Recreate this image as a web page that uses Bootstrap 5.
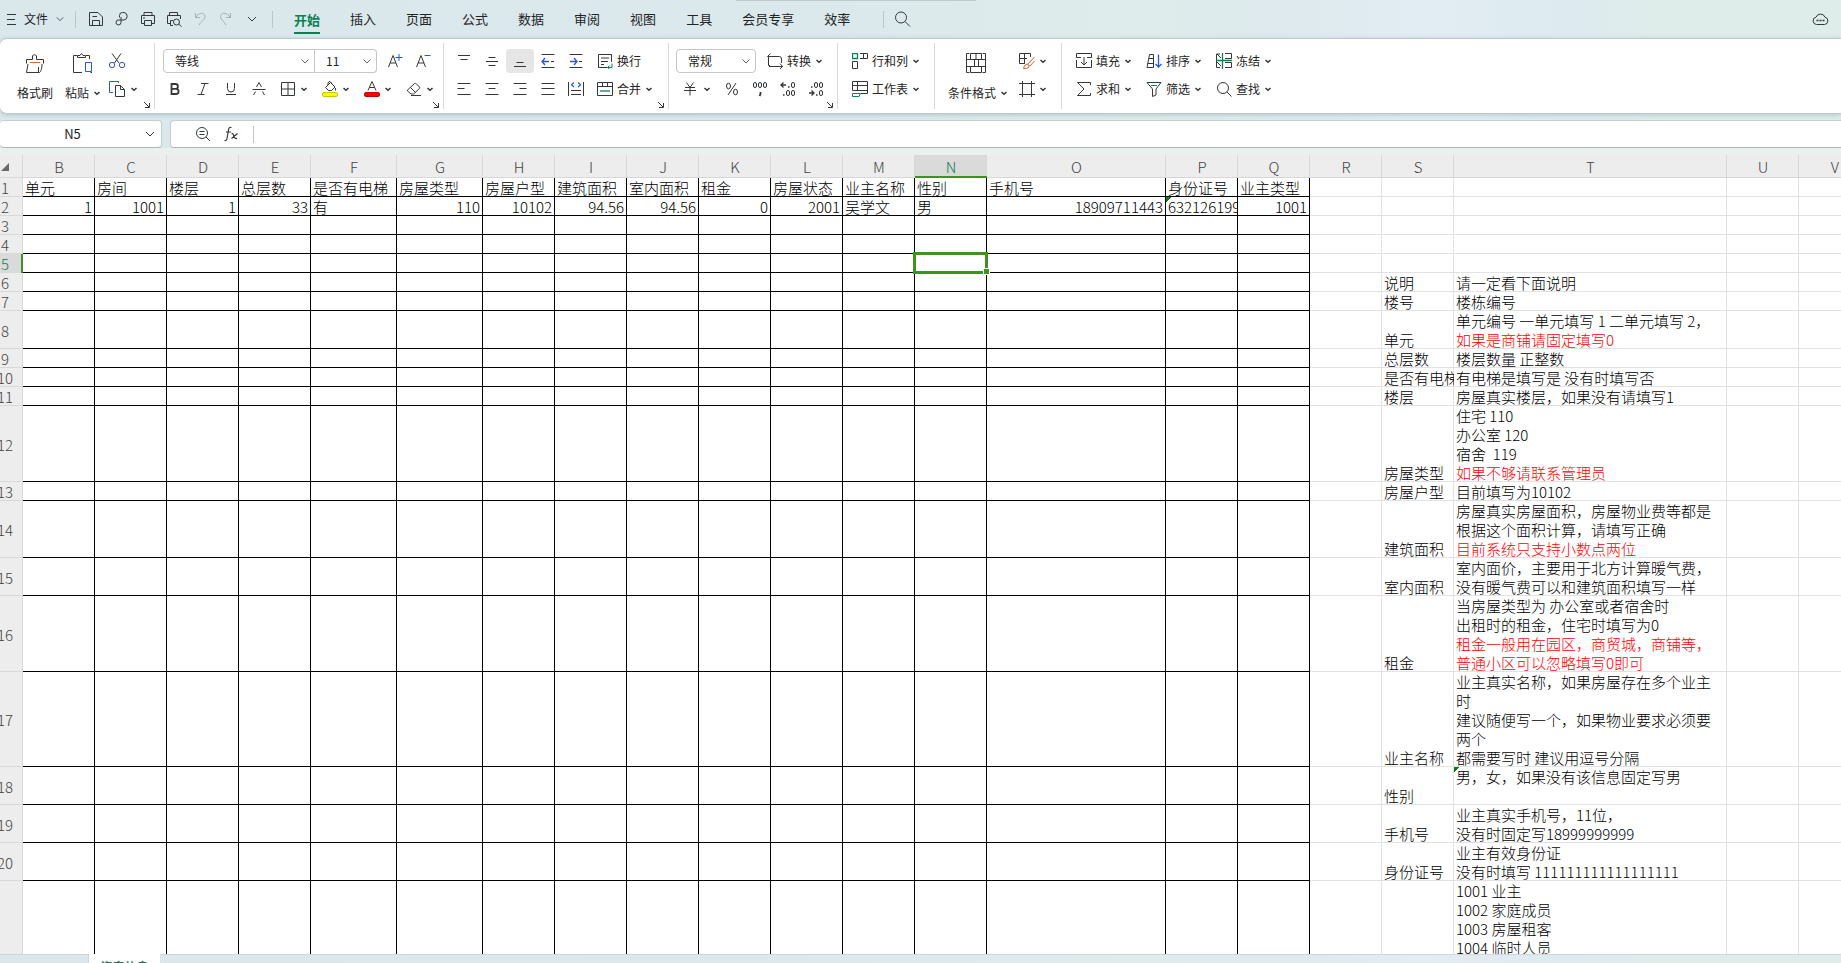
<!DOCTYPE html>
<html lang="zh-CN">
<head>
<meta charset="utf-8">
<meta name="viewport" content="width=device-width, initial-scale=1">
<title>资产信息</title>
<link href="https://cdn.jsdelivr.net/npm/bootstrap@5.3.0/dist/css/bootstrap.min.css" rel="stylesheet">
<style>
:root{--ink:#2b2f31;--line:#e2e2e2;--head:#ededed;--pick:#3f9220;--brand:#0a8055}
body{font-family:"Noto Sans CJK SC","Noto Sans",sans-serif;font-size:12px;line-height:16px;color:#1f2426;overflow:hidden}
.app-frame{height:calc(100vh + 19px);background:linear-gradient(90deg,#dae8ec 0,#dbe9ed 45%,#deeceb 62%,#deeaee 70%,#e2ecf3 77%,#ddebf1 85%,#deecea 90%,#deecea 100%)}
svg{display:block;fill:none;stroke:#34383a;stroke-width:1;flex:none}
.btn{--bs-btn-padding-x:0;--bs-btn-padding-y:0;--bs-btn-font-size:12px;--bs-btn-line-height:16px;--bs-btn-border-width:0px;--bs-btn-border-radius:4px;--bs-btn-color:#1f2426;--bs-btn-hover-bg:#e6e6e6;display:flex;align-items:center;flex:none}
.bl{stroke:#2a56dc}.gr{stroke:#0a8055}.og{stroke:#d4622a}.mute{stroke:#a5aeb2}
.sheen{top:0;left:40%;width:13%;height:1px;background:#bfcacd}

/* menu bar */
.menu-bar{height:38px;padding-left:7px;padding-right:12px}
.quick .btn{width:26px;height:24px;justify-content:center}
.vbar{width:1px;height:17px;background:#bac7ca;flex:none}
.after-file{margin:0 7px 0 11px}
.after-quick{margin:0 6px 0 7px}
.after-tabs{margin:0 9px 0 18px}
.tab-link{padding:0 15px;font-size:13px;line-height:30px;color:#1f2426;text-decoration:none;white-space:nowrap}
.tab-link.active{color:var(--brand);font-weight:700}
.tab-link.active span{display:block;box-shadow:0 2px 0 var(--brand);line-height:24px;margin-top:4px}

/* ribbon */
.ribbon{height:76px;border:1px solid #bccacd;border-left:0;border-right:0;border-radius:7px 0 0 7px;background:#fff;box-shadow:0 1px 4px #8fa6aa88}
.grp{height:66px;margin-top:4px;padding:4px 0 0 7px;border-right:1px solid #d5d8d9;flex:none}
.grp:last-child{border:0}
.line-row{height:28px}
.tool{width:28px;height:24px;justify-content:center}
.tool.on{background:#e6e6e6}
.drop{height:24px;padding:0 7px;gap:4px}
.big{height:52px;flex-direction:column;gap:12px;padding:6px 0 0}
.launch{right:3px;bottom:0}
.combo{appearance:none;font-size:12px;line-height:22px;height:24px;padding:0 20px 0 11px;border:1px solid #c3c6c7;border-radius:4px;color:#1f2426;background:#fff url("data:image/svg+xml,%3Csvg xmlns='http://www.w3.org/2000/svg' width='8' height='5'%3E%3Cpath d='M.5.5 4 4 7.5.5' fill='none' stroke='%23666'/%3E%3C/svg%3E") no-repeat right 5px center/8px 5px}
.combo-font{width:152px;margin-left:2px}.combo-size{width:62px}.combo-num{width:80px}
.g-clip{width:155px;padding-left:13px}.g-font{width:289px;padding-left:6px}.g-align{width:225px;padding-left:6px}.g-num{width:169px}.g-rows{width:97px}.g-style{width:127px;padding-left:13px}

/* formula bar */
.formula{margin-top:6px;height:28px}
.box{background:#fff;border:1px solid #c2ced0;border-bottom-color:#aeb6b7;border-radius:4px;height:28px}
.name-box{width:162px;border-left:0;padding-right:6px}
.box input{border:0;background:transparent;font-size:13px;line-height:18px;outline:0;color:#1f2426;min-width:0}
.f-box{border-right:0;border-radius:4px 0 0 4px}

/* grid */
.sheet{background:#ebefee;padding-top:7px}
.grid{table-layout:fixed;width:1884px;margin-left:-13px;border-collapse:separate;border-spacing:0;background:#fff;font-size:15px;line-height:19px;font-weight:300;color:#000}
.grid th{font-weight:300;color:#444;background:var(--head);text-align:center;vertical-align:middle;padding:0;box-shadow:inset -1px -1px 0 #d8d8d8;overflow:hidden}
.grid thead th{height:23px}
.grid td{padding:0 3px 0 2px;vertical-align:bottom;white-space:nowrap;overflow:hidden;box-shadow:inset -1px -1px 0 var(--line)}
.grid td.ruled{box-shadow:inset -1px -1px 0 #000}
.grid td.note{white-space:pre-wrap;vertical-align:top}
.grid td.num{text-align:right}
.grid thead th.sel{background:#dadada;color:var(--brand);box-shadow:inset 0 -2px 0 var(--pick)}
.grid tbody th.sel{background:#dadada;color:var(--brand);box-shadow:inset -2px 0 0 var(--pick)}
.grid td.cursor{overflow:visible;position:relative}
.cursor i{position:absolute;inset:-2px -1px -1px -2px;border:3px solid var(--pick)}
.cursor i::after{content:"";position:absolute;right:-5px;bottom:-4px;width:7px;height:7px;background:var(--pick);border:1px solid #fff}
.grid td.flag{background:linear-gradient(135deg,#0a7d18 4px,transparent 4px)}
.hot{color:#f00}
.corner svg{margin-left:14px}

/* sheet tabs */
.sheet-tabs{height:28px;flex:none}
.side-rule{border-top:1px solid #d2d6d7;height:28px}
.nav-set{width:89px;border-right:1px solid #d2d6d7;padding-top:4px}
.sheet-tab{width:71px;height:28px;background:#fff;color:var(--brand);font-weight:700;text-decoration:none;padding-top:5px}
</style>
</head>
<body>
<svg width="0" height="0" class="position-absolute" aria-hidden="true">
  <symbol id="cv" viewBox="0 0 8 8"><path d="M1.500 3 4 5.300 6.500 3" stroke-width="1.500"/></symbol>
  <symbol id="cl" viewBox="0 0 10 8"><path d="M1 2 5 6 9 2"/></symbol>
  <symbol id="la" viewBox="0 0 8 8"><path d="M1 1 6 6M2 6.500H6.500V2"/></symbol>
</svg>
<div class="app-frame d-flex flex-column position-relative">
  <div class="sheen position-absolute"></div>

  <header class="menu-bar d-flex align-items-center flex-shrink-0">
    <button class="btn" type="button"><svg width="9" height="11"><path d="M0 .5H9M0 5.500H8M0 10.500H9"/></svg><span class="ms-2 me-2">文件</span><svg width="8" height="8"><use href="#cl"/></svg></button>
    <span class="vbar after-file"></span>
    <div class="quick d-flex">
      <button class="btn" type="button" aria-label="保存"><svg width="16" height="16"><path d="M1.500 1.500H10L14.500 6V14.500H1.500ZM4.500 14V9.500H11.500V14M4.500 5.500H9"/></svg></button>
      <button class="btn" type="button" aria-label="输出为PDF"><svg width="16" height="16"><path d="M5.500 6.500V4.500A3 3 0 0 1 8.500 1.500H10A3.800 3.800 0 0 1 10 9H5A2.500 2.500 0 1 0 7 11.500V6"/></svg></button>
      <button class="btn" type="button" aria-label="打印"><svg width="16" height="16"><path d="M4 4.500V1.500H12V4.500M4 12.500H1.500V4.500H14.500V12.500H12M4.500 9.500H11.500V14.500H4.500ZM3 7H5"/></svg></button>
      <button class="btn" type="button" aria-label="打印预览"><svg width="16" height="16"><path d="M3.500 4.500V1.500H11.500V4.500M4 12.500H1.500V4.500H14.500V8M7 9.500H4.500V14.500H7"/><circle cx="10.500" cy="11" r="3"/><path d="M12.500 13 15.500 15.500"/></svg></button>
      <button class="btn" type="button" aria-label="撤销"><svg class="mute" width="16" height="16"><path d="M3.500 2V6.500H8M3.500 6.500C8 0 13 2 13 5.500C13 9 9 10 7 14"/></svg></button>
      <button class="btn" type="button" aria-label="恢复"><svg class="mute" width="16" height="16"><path d="M12.500 2V6.500H8M12.500 6.500C8 0 2.500 2 2.500 5.500C2.500 9 6 10 8 14"/></svg></button>
      <button class="btn" type="button" aria-label="更多"><svg width="10" height="8"><use href="#cl"/></svg></button>
    </div>
    <span class="vbar after-quick"></span>
    <nav class="d-flex" aria-label="功能区">
      <a class="tab-link active" href="#"><span>开始</span></a><a class="tab-link" href="#">插入</a><a class="tab-link" href="#">页面</a><a class="tab-link" href="#">公式</a><a class="tab-link" href="#">数据</a><a class="tab-link" href="#">审阅</a><a class="tab-link" href="#">视图</a><a class="tab-link" href="#">工具</a><a class="tab-link" href="#">会员专享</a><a class="tab-link" href="#">效率</a>
    </nav>
    <span class="vbar after-tabs"></span>
    <button class="btn" type="button" aria-label="搜索"><svg width="18" height="18"><circle cx="8" cy="7.500" r="5.500"/><path d="M12 11.500 17 16.500"/></svg></button>
    <button class="btn ms-auto" type="button" aria-label="云文档"><svg width="17" height="14"><path d="M4.500 12.500H12.500A3.700 3.700 0 0 0 13 5.200A4.800 4.800 0 0 0 4 5.200A3.700 3.700 0 0 0 4.500 12.500Z"/><path d="M4.500 8.500H6.500M7.500 8.500H9.500M10.500 8.500H12.500" stroke-width="1.600"/></svg></button>
  </header>

  <section class="ribbon d-flex flex-shrink-0" aria-label="开始">
    <div class="grp g-clip d-flex position-relative">
      <button class="btn big me-2" type="button"><svg width="20" height="20"><path d="M1.500 10.500V6.500H7.500V3A2.200 2.200 0 0 1 11.500 3V6.500H18.500V10.500M3 11 1.500 19.500H14.500Q17 18 17 11M13.500 14V19"/><path class="og" d="M5 9.500H15"/></svg><span class="px-1">格式刷</span></button>
      <button class="btn big" type="button"><svg width="22" height="20"><path d="M5 2.500H1.500V19.500H10M5.500 4.500V2.500H8Q9.500-1 11 2.500H13.500V4.500ZM14 2.500H17.500V6M18.500 19.500H20"/><path class="bl" d="M13.500 9.500H19.500V18.500H13.500Z"/></svg><span class="d-flex align-items-center">粘贴<svg class="ms-1" width="8" height="8"><use href="#cv"/></svg></span></button>
      <div>
        <div class="line-row d-flex align-items-center"><button class="btn drop" type="button" aria-label="剪切"><svg width="18" height="18"><path d="M4 1.500 11 11M13 1.500 6.500 11"/><circle class="bl" cx="4" cy="13" r="2.700"/><circle class="bl" cx="14" cy="13" r="2.700"/></svg></button></div>
        <div class="line-row d-flex align-items-center"><button class="btn drop" type="button" aria-label="复制"><svg width="18" height="18"><path class="bl" d="M5 12.500H1.500V1.500H10.500V3"/><path d="M7.500 5.500H12.500L16.500 9.500V16.500H7.500ZM12.500 5.500V9.500H16.500"/></svg><svg width="8" height="8"><use href="#cv"/></svg></button></div>
      </div>
      <svg class="launch position-absolute" width="8" height="8"><use href="#la"/></svg>
    </div>

    <div class="grp g-font position-relative">
      <div class="line-row d-flex align-items-center">
        <select class="combo combo-font rounded-end-0" aria-label="字体"><option>等线</option></select>
        <select class="combo combo-size rounded-start-0 border-start-0" aria-label="字号"><option>11</option></select>
        <button class="btn tool ms-1" type="button" aria-label="增大字号"><svg width="16" height="16"><path d="M1.500 14 6 2.500 10.500 14M3 10H9"/><path class="bl" d="M8.500 4.500H15.500M12 1V8"/></svg></button>
        <button class="btn tool" type="button" aria-label="减小字号"><svg width="16" height="16"><path d="M1.500 14 6 2.500 10.500 14M3 10H9"/><path class="bl" d="M9.500 2.500H15.500"/></svg></button>
      </div>
      <div class="line-row d-flex align-items-center">
        <button class="btn tool" type="button" aria-label="加粗"><svg width="16" height="16"><path d="M4.500 3H8.500A2.400 2.400 0 0 1 8.500 7.800H4.500ZM4.500 7.800H9A2.600 2.600 0 0 1 9 13H4.500Z" stroke-width="1.800"/></svg></button>
        <button class="btn tool" type="button" aria-label="倾斜"><svg width="16" height="16"><path d="M6 2.500H13.500M2.500 13.500H9.500M10 2.500 6 13.500"/></svg></button>
        <button class="btn tool" type="button" aria-label="下划线"><svg width="16" height="16"><path d="M4.500 2V7.500A3.500 3.500 0 0 0 11.500 7.500V2M3 13.500H13"/></svg></button>
        <button class="btn tool" type="button" aria-label="删除线"><svg width="16" height="16"><path d="M1.500 8.500H14.500M5.500 6 8 1.500 10.500 6M4.500 10.500 2.500 14M11.500 10.500 13.500 14"/></svg></button>
        <button class="btn drop" type="button" aria-label="边框"><svg width="16" height="16"><path d="M1.500 1.500H14.500V14.500H1.500ZM8 1.500V14.500M1.500 8H14.500"/></svg><svg width="8" height="8"><use href="#cv"/></svg></button>
        <button class="btn drop" type="button" aria-label="填充颜色"><svg width="16" height="18"><path d="M3.500 7.500 8.500 2.500 13 7 9.500 10.500H6.500ZM6 5V3Q6.500 1.500 8 1.500L10 3.500M13.500 8V10.500"/><rect x=".5" y="12.500" width="15" height="4" rx="1.500" fill="#ff0" stroke="#c8c800"/></svg><svg width="8" height="8"><use href="#cv"/></svg></button>
        <button class="btn drop" type="button" aria-label="字体颜色"><svg width="16" height="18"><path d="M4 10.500 8 1.500 12 10.500M5.500 7.500H10.500"/><rect x=".5" y="12.500" width="15" height="4" rx="1.500" fill="#f00" stroke="#cc0000"/></svg><svg width="8" height="8"><use href="#cv"/></svg></button>
        <button class="btn drop" type="button" aria-label="清除"><svg width="16" height="16"><path d="M1.500 9 8.500 2.500Q9.500 2 10.500 3L13.500 6Q14 7 13.500 7.500L7.500 13H5L1.500 10ZM4.500 6.500 9.500 11.500M5 14.500H15"/></svg><svg width="8" height="8"><use href="#cv"/></svg></button>
      </div>
      <svg class="launch position-absolute" width="8" height="8"><use href="#la"/></svg>
    </div>

    <div class="grp g-align position-relative">
      <div class="line-row d-flex align-items-center">
        <button class="btn tool" type="button" aria-label="顶端对齐"><svg width="14" height="14"><path d="M1 1.500H13M3.500 5.500H10.500"/></svg></button>
        <button class="btn tool" type="button" aria-label="垂直居中"><svg width="14" height="14"><path d="M3.500 3.500H10.500M1 7.500H13M3.500 11.500H10.500"/></svg></button>
        <button class="btn tool on" type="button" aria-label="底端对齐"><svg width="14" height="14"><path d="M3.500 8.500H10.500M1 12.500H13"/></svg></button>
        <button class="btn tool" type="button" aria-label="减少缩进"><svg width="14" height="14"><path d="M.5 .5H13.500M10 7.500H13M.5 13.500H13.500"/><path class="bl" d="M1 7.500H8M4 4 1 7.500 4 11" stroke-width="1.300"/></svg></button>
        <button class="btn tool" type="button" aria-label="增加缩进"><svg width="14" height="14"><path d="M.5 .5H13.500M10 7.500H13M.5 13.500H13.500"/><path class="bl" d="M1 7.500H8M5 4 8 7.500 5 11" stroke-width="1.300"/></svg></button>
        <button class="btn drop" type="button"><svg width="16" height="16"><path d="M10 14.500H1.500V1.500H14.500V9M4 5H12M4 8.500H11M4 11.500H7"/><path class="gr" d="M15 10.500V14.500H10.500M12.500 12.500 10.500 14.500 12.500 16"/></svg>换行</button>
      </div>
      <div class="line-row d-flex align-items-center">
        <button class="btn tool" type="button" aria-label="左对齐"><svg width="14" height="14"><path d="M.5 1.500H13.500M.5 6.500H7.500M.5 12.500H13.500"/></svg></button>
        <button class="btn tool" type="button" aria-label="水平居中"><svg width="14" height="14"><path d="M.5 1.500H13.500M3.500 6.500H10.500M.5 12.500H13.500"/></svg></button>
        <button class="btn tool" type="button" aria-label="右对齐"><svg width="14" height="14"><path d="M.5 1.500H13.500M6.500 6.500H13.500M.5 12.500H13.500"/></svg></button>
        <button class="btn tool" type="button" aria-label="两端对齐"><svg width="14" height="14"><path d="M.5 1.500H13.500M.5 6.500H13.500M.5 12.500H13.500"/></svg></button>
        <button class="btn tool" type="button" aria-label="分散对齐"><svg width="16" height="16"><path d="M.5 1V15M15.500 1V15M3 9.500H13M3 13.500H13"/><path class="bl" d="M6 1.500 3.500 3.800 6 6M10 1.500 12.500 3.800 10 6" stroke-width="1.200"/></svg></button>
        <button class="btn drop" type="button"><svg width="16" height="16"><path d="M.5 1.500H15.500V14.500H.5ZM.5 5.500H15.500M5.500 1.500V5.500M10.500 1.500V5.500"/><path class="gr" d="M3 10H13" stroke-width="1.300"/></svg>合并<svg width="8" height="8"><use href="#cv"/></svg></button>
      </div>
      <svg class="launch position-absolute" width="8" height="8"><use href="#la"/></svg>
    </div>

    <div class="grp g-num position-relative">
      <div class="line-row d-flex align-items-center">
        <select class="combo combo-num me-1" aria-label="数字格式"><option>常规</option></select>
        <button class="btn drop" type="button"><svg width="16" height="16"><path d="M1.500 4V12.500H3M3.500 .5 .5 3.500M.5 3.500H12.500Q14.500 3.500 14.500 6V10M2 13.500H15.500M13 10.500 15.500 13.500 13 16"/></svg>转换<svg width="8" height="8"><use href="#cv"/></svg></button>
      </div>
      <div class="line-row d-flex align-items-center">
        <button class="btn drop" type="button" aria-label="货币"><svg width="16" height="16"><path d="M3.500 1.500 7 6.500 10.500 1.500M2 6.500H12M1 9.500H13M7 6.500V14.500"/></svg><svg width="8" height="8"><use href="#cv"/></svg></button>
        <button class="btn tool" type="button" aria-label="百分比"><svg width="14" height="14"><ellipse cx="3.500" cy="4" rx="2" ry="2.800"/><ellipse cx="10.500" cy="10" rx="2" ry="2.800"/><path d="M11 1 3 13"/></svg></button>
        <button class="btn tool" type="button" aria-label="千位分隔"><svg width="16" height="16"><rect x="1.500" y="1.500" width="3" height="5" rx="1.500"/><rect x="6.500" y="1.500" width="3" height="5" rx="1.500"/><rect x="11.500" y="1.500" width="3" height="5" rx="1.500"/><path d="M8.500 11V13L7.500 15" stroke-width="1.800"/></svg></button>
        <button class="btn tool" type="button" aria-label="增加小数位"><svg width="16" height="16"><path d="M1 4H6M3.500 1.500 1 4 3.500 6.500M8 6H9.500M3 14H4.500" stroke-width="1.300"/><rect x="11.500" y="1.500" width="3" height="5" rx="1.500"/><rect x="6.500" y="9.500" width="3" height="5" rx="1.500"/><rect x="11.500" y="9.500" width="3" height="5" rx="1.500"/></svg></button>
        <button class="btn tool" type="button" aria-label="减少小数位"><svg width="16" height="16"><path d="M1 12H6M3.500 9.500 6 12 3.500 14.500M8 14H9.500M3 6H4.500" stroke-width="1.300"/><rect x="11.500" y="9.500" width="3" height="5" rx="1.500"/><rect x="6.500" y="1.500" width="3" height="5" rx="1.500"/><rect x="11.500" y="1.500" width="3" height="5" rx="1.500"/></svg></button>
      </div>
      <svg class="launch position-absolute" width="8" height="8"><use href="#la"/></svg>
    </div>

    <div class="grp g-rows">
      <div class="line-row d-flex align-items-center"><button class="btn drop" type="button"><svg width="16" height="16"><path class="gr" d="M.5 .5H5.500V5.500H.5Z" stroke-width="1.300"/><path d="M.5 8.500H5.500V15.500H.5ZM8 .5H15.500V5.500H8M11.500 .5V5.500"/></svg>行和列<svg width="8" height="8"><use href="#cv"/></svg></button></div>
      <div class="line-row d-flex align-items-center"><button class="btn drop" type="button"><svg width="16" height="16"><path d="M.5 9.500V.5H15.500V12.500H9M.5 4.500H15.500M.5 9.500H15.500M5.500 .5V9.500"/><path class="gr" d="M.5 12.500H8.500L7 15.500H.5Z"/></svg>工作表<svg width="8" height="8"><use href="#cv"/></svg></button></div>
    </div>

    <div class="grp g-style d-flex">
      <button class="btn big me-1" type="button"><svg class="me-1" width="20" height="20"><path d="M3.500 .5H.5V19.500H3.500M16.500 .5H19.500V19.500H16.500M4.500 .5H15.500V6.500H4.500ZM.5 6.500H19.500M.5 13.500H19.500M8.500 6.500V13.500M12.500 6.500V13.500M4.500 13.500H15.500V19.500H4.500ZM10 .5V6.500"/></svg><span class="d-flex align-items-center">条件格式<svg class="ms-1" width="8" height="8"><use href="#cv"/></svg></span></button>
      <div>
        <div class="line-row d-flex align-items-center"><button class="btn drop" type="button" aria-label="单元格样式"><svg width="16" height="16"><path d="M6 10.500H.5V.5H11.500V4M.5 5.500H8M5.500 .5V10.500"/><path class="og" d="M15.500 4 9 11M15.500 8 11 13M4.500 15.500Q5 11.500 8 11Q11 11.500 10 14Q8.500 16 4.500 15.500Z"/></svg><svg width="8" height="8"><use href="#cv"/></svg></button></div>
        <div class="line-row d-flex align-items-center"><button class="btn drop" type="button" aria-label="单元格"><svg width="16" height="16"><path d="M3.500 0V16M12.500 0V16M0 2.500H16M0 13.500H16"/></svg><svg width="8" height="8"><use href="#cv"/></svg></button></div>
      </div>
    </div>

    <div class="grp">
      <div class="line-row d-flex align-items-center">
        <button class="btn drop" type="button"><svg width="16" height="16"><path d="M.5 4.500V.5H15.500V4.500M.5 4.500H5M11 4.500H15.500M.5 7V14.500H15.500V7M8 4V12M5 9 8 12 11 9"/></svg>填充<svg width="8" height="8"><use href="#cv"/></svg></button>
        <button class="btn drop" type="button"><svg width="16" height="16"><path d="M1 14.500 3.500 1.500H7.500V14.500ZM2.800 5.500H7.500M1.800 10.500H7.500"/><path class="bl" d="M12.500 1.500V14M9.500 11 12.500 14 15.500 11" stroke-width="1.300"/></svg>排序<svg width="8" height="8"><use href="#cv"/></svg></button>
        <button class="btn drop" type="button"><svg width="16" height="16"><path d="M4 14.500H.5V1H4M9 .5H15.500V5.500H9M9 9.500H15.500V14.500H9M1 1 5 5M1 9 5 13"/><path class="gr" d="M0 7.500H16M6.500 0V16" stroke-width="1.300"/></svg>冻结<svg width="8" height="8"><use href="#cv"/></svg></button>
      </div>
      <div class="line-row d-flex align-items-center">
        <button class="btn drop" type="button"><svg width="16" height="16"><path d="M14.500 4V1.500H1.500L8 8 1.500 14.500H14.500V12"/></svg>求和<svg width="8" height="8"><use href="#cv"/></svg></button>
        <button class="btn drop" type="button"><svg width="16" height="16"><path d="M1 1.500H15L10 8V14L6.500 15.500V8Z"/><path class="gr" d="M5 4.500H11"/></svg>筛选<svg width="8" height="8"><use href="#cv"/></svg></button>
        <button class="btn drop" type="button"><svg width="16" height="16"><circle cx="7" cy="7" r="5.500"/><path d="M11 11 15.500 15.500"/></svg>查找<svg width="8" height="8"><use href="#cv"/></svg></button>
      </div>
    </div>
  </section>

  <div class="formula d-flex flex-shrink-0">
    <div class="box name-box d-flex align-items-center">
      <input class="flex-grow-1 text-center" aria-label="名称框" value="N5">
      <svg width="10" height="8"><use href="#cl"/></svg>
    </div>
    <div class="box f-box d-flex align-items-center flex-grow-1 ms-2 ps-4 gap-2">
      <button class="btn" type="button" aria-label="浏览公式"><svg width="16" height="16"><circle cx="7" cy="7" r="5.500"/><path d="M11 11 15 15M4.500 5.500H9.500M4.500 8.500H9.500"/></svg></button>
      <button class="btn ms-1" type="button" aria-label="插入函数"><svg width="18" height="16"><path d="M8.500 1.500Q6 .5 5.500 4L4 12.500Q3.500 15 1.500 14.500M3 6H8M8.500 7.500Q10 7 11 10Q12 13.500 14 12.500M14.500 7.500 8.500 12.500" stroke-width="1.200"/></svg></button>
      <span class="vbar ms-1"></span>
      <input class="flex-grow-1" aria-label="编辑栏">
    </div>
  </div>

  <main class="sheet flex-grow-1 overflow-hidden">
    <table class="grid">
      <colgroup id="cols"></colgroup>
      <thead><tr id="letters"></tr></thead>
      <tbody id="cells"></tbody>
    </table>
  </main>

  <footer class="sheet-tabs d-flex">
    <div class="nav-set side-rule d-flex justify-content-between px-1">
      <button class="btn" type="button" aria-label="第一张"><svg class="mute" width="10" height="12"><path d="M1.500 2V10M8 2 4 6 8 10"/></svg></button>
      <button class="btn" type="button" aria-label="上一张"><svg class="mute" width="10" height="12"><path d="M7 2 3 6 7 10"/></svg></button>
      <button class="btn" type="button" aria-label="下一张"><svg class="mute" width="10" height="12"><path d="M3 2 7 6 3 10"/></svg></button>
      <button class="btn" type="button" aria-label="最后一张"><svg class="mute" width="10" height="12"><path d="M8.500 2V10M2 2 6 6 2 10"/></svg></button>
    </div>
    <a class="sheet-tab text-center" href="#">资产信息</a>
    <div class="side-rule flex-grow-1 border-start"></div>
  </footer>
</div>

<script>
// Column letter and width; the first entry is the row header.
const columns = [['', 36], ['B', 72], ['C', 72], ['D', 72], ['E', 72], ['F', 86], ['G', 86], ['H', 72], ['I', 72], ['J', 72],
  ['K', 72], ['L', 72], ['M', 72], ['N', 72], ['O', 179], ['P', 72], ['Q', 72], ['R', 72], ['S', 72], ['T', 273], ['U', 72], ['V', 72]];
const lastRuled = 16;
const heads = ['单元', '房间', '楼层', '总层数', '是否有电梯', '房屋类型', '房屋户型', '建筑面积', '室内面积', '租金', '房屋状态', '业主名称', '性别', '手机号', '身份证号', '业主类型'];
const record = [1, 1001, 1, 33, '有', 110, 10102, '94.56', '94.56', 0, 2001, '吴学文', '男', 18909711443, '632126199', 1001];
// Row number: [lines of height, label, note]; a line starting with "!" is red.
const notes = {
  6: [1, '说明', '请一定看下面说明'],
  7: [1, '楼号', '楼栋编号'],
  8: [2, '单元', '单元编号 一单元填写 1 二单元填写 2，\n!如果是商铺请固定填写0'],
  9: [1, '总层数', '楼层数量 正整数'],
  10: [1, '是否有电梯', '有电梯是填写是 没有时填写否'],
  11: [1, '楼层', '房屋真实楼层，如果没有请填写1'],
  12: [4, '房屋类型', '住宅 110\n办公室 120\n宿舍  119\n!如果不够请联系管理员'],
  13: [1, '房屋户型', '目前填写为10102'],
  14: [3, '建筑面积', '房屋真实房屋面积，房屋物业费等都是根据这个面积计算，请填写正确\n!目前系统只支持小数点两位'],
  15: [2, '室内面积', '室内面价，主要用于北方计算暖气费，\n没有暖气费可以和建筑面积填写一样'],
  16: [4, '租金', '当房屋类型为 办公室或者宿舍时\n出租时的租金，住宅时填写为0\n!租金一般用在园区，商贸城，商铺等，\n!普通小区可以忽略填写0即可'],
  17: [5, '业主名称', '业主真实名称，如果房屋存在多个业主时\n建议随便写一个，如果物业要求必须要两个\n都需要写时 建议用逗号分隔'],
  18: [2, '性别', '男，女，如果没有该信息固定写男'],
  19: [2, '手机号', '业主真实手机号，11位，\n没有时固定写18999999999'],
  20: [2, '身份证号', '业主有效身份证\n没有时填写 111111111111111111'],
  21: [10, '业主类型', '1001 业主\n1002 家庭成员\n1003 房屋租客\n1004 临时人员']
};
const rich = s => s.split('\n').map(l => l[0] === '!' ? `<span class="hot">${l.slice(1)}</span>` : l).join('\n');

cols.innerHTML = columns.map(c => `<col style="width:${c[1]}px">`).join('');
letters.innerHTML = columns.map(([l], i) => i === 0
  ? '<th class="corner"><svg width="8" height="8"><path d="M8 0V8H0Z" fill="#6a6a6a" stroke="none"/></svg></th>'
  : `<th scope="col"${l === 'N' ? ' class="sel"' : ''}>${l}</th>`).join('');

let html = '';
for (let r = 1; r <= 21; r++) {
  const note = notes[r];
  html += `<tr style="height:${19 * (note ? note[0] : 1)}px"><th scope="row"${r === 5 ? ' class="sel"' : ''}>${r}</th>`;
  for (let c = 1; c < columns.length; c++) {
    const letter = columns[c][0], cls = [];
    let text = '';
    if (c <= lastRuled) cls.push('ruled');
    if (r === 1 && c <= lastRuled) text = heads[c - 1];
    if (r === 2 && c <= lastRuled) {
      text = record[c - 1];
      if (/^[\d.]+$/.test(text) && letter !== 'P') cls.push('num');
    }
    if (note && letter === 'S') text = note[1];
    if (note && letter === 'T') { text = rich(note[2]); cls.push('note'); }
    if ((r === 2 && letter === 'P') || (r === 18 && letter === 'T')) cls.push('flag');
    if (r === 5 && letter === 'N') { text = '<i></i>'; cls.push('cursor'); }
    html += `<td class="${cls.join(' ')}">${text}</td>`;
  }
  html += '</tr>';
}
cells.innerHTML = html;
</script>
<script src="https://cdn.jsdelivr.net/npm/bootstrap@5.3.0/dist/js/bootstrap.bundle.min.js"></script>
</body>
</html>
